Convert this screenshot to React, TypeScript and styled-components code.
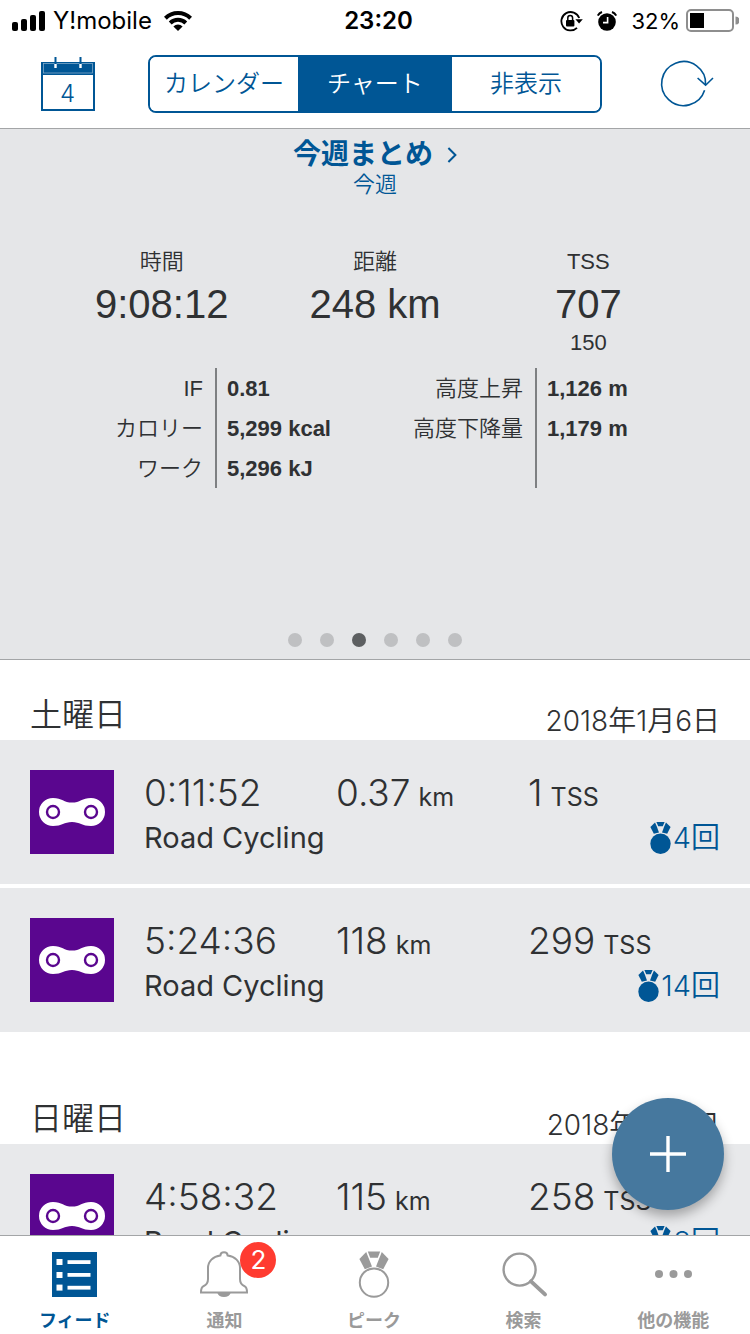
import React from 'react';
import styled, { createGlobalStyle } from 'styled-components';

const color = {
  brand: '#005695',
  ink: '#2f3133',
  panel: '#e5e6e8',
  card: '#e8e9eb',
  line: '#a3a5a7',
  muted: '#9a9a9a',
  purple: '#5a068f',
  alert: '#ff3b30',
};

const GlobalStyle = createGlobalStyle`
  * { box-sizing: border-box; }
  body {
    margin: 0;
    background: #fff;
    color: ${color.ink};
    font-family: Inter, "Noto Sans CJK JP", sans-serif;
  }
  h1, h2, p, dl, dd, dt, ul { margin: 0; padding: 0; font-weight: inherit; }
  ul { list-style: none; }
  button { font: inherit; color: inherit; border: 0; padding: 0; background: none; cursor: pointer; }
  a { color: inherit; text-decoration: none; }
  svg { display: block; flex: none; }
`;

const Screen = styled.div`
  display: flex;
  flex-direction: column;
  height: 100vh;
  overflow: hidden;
`;

/* Status bar */

const StatusBar = styled.header`
  display: grid;
  grid-template-columns: 1fr auto 1fr;
  align-items: center;
  flex: none;
  height: 40px;
  padding: 0 11px 0 12px;
  color: #000;
  font-size: 24px;
  line-height: 42px;
`;

const StatusGroup = styled.div<{ $end?: boolean; $gap: number }>`
  display: flex;
  align-items: center;
  justify-content: ${(p) => (p.$end ? 'flex-end' : 'flex-start')};
  gap: ${(p) => p.$gap}px;
`;

const Carrier = styled.span`
  margin-right: 4px;
`;

const Clock = styled.time`
  padding-left: 6px;
  font-weight: 600;
`;

const BatteryLevel = styled.span`
  font-size: 22px;
`;

/* Navigation bar */

const NavBar = styled.nav`
  display: grid;
  grid-template-columns: 1fr minmax(0, 454px) 1fr;
  align-items: center;
  flex: none;
  height: 89px;
  padding: 0 36px;
  border-bottom: 1px solid ${color.line};
`;

const IconButton = styled.button<{ $end?: boolean }>`
  width: 60px;
  height: 60px;
  justify-self: ${(p) => (p.$end ? 'end' : 'start')};
  color: ${color.brand};
`;

const Segments = styled.div`
  display: grid;
  grid-template-columns: 1fr 154px 1fr;
  height: 58px;
  border: 2px solid ${color.brand};
  border-radius: 8px;
  overflow: hidden;
`;

const Segment = styled.button<{ $active?: boolean }>`
  font-size: 24px;
  font-weight: 350;
  line-height: 54px;
  white-space: nowrap;
  color: ${(p) => (p.$active ? '#fff' : color.brand)};
  background: ${(p) => (p.$active ? color.brand : '#fff')};
`;

/* Weekly summary */

const Summary = styled.section`
  display: flex;
  flex-direction: column;
  flex: none;
  height: 531px;
  padding: 10px 55px 12px;
  background: ${color.panel};
  border-bottom: 1px solid ${color.line};
  font-family: "Liberation Sans", "Noto Sans CJK JP", sans-serif;
`;

const SummaryLink = styled.a`
  display: flex;
  flex-direction: column;
  align-items: center;
  color: ${color.brand};
`;

const SummaryTitle = styled.h1`
  display: flex;
  align-items: center;
  gap: 14px;
  font-size: 28px;
  font-weight: 700;
  line-height: 32px;
`;

const SummaryPeriod = styled.p`
  font-size: 22px;
  font-weight: 350;
  line-height: 28px;
`;

const Totals = styled.dl`
  display: grid;
  grid-template-columns: repeat(3, 1fr);
  margin-top: 47px;
  text-align: center;
`;

const Label = styled.dt`
  font-size: 22px;
  font-weight: 350;
  line-height: 32px;
`;

const Total = styled.dd`
  font-size: 40px;
  line-height: 52px;
`;

const Planned = styled.dd`
  font-size: 22px;
  line-height: 26px;
`;

const Details = styled.div`
  display: grid;
  grid-template-columns: 1fr 1fr;
  margin-top: 12px;
`;

const DetailList = styled.dl`
  display: grid;
  grid-template-columns: 160px 1fr;
  grid-auto-rows: 40px;
  min-height: 120px;
  background: linear-gradient(#7e8082, #7e8082) 160px 0 / 2px 100% no-repeat;
`;

const DetailLabel = styled(Label)`
  padding-right: 12px;
  line-height: 42px;
  text-align: right;
  white-space: nowrap;
`;

const DetailValue = styled.dd`
  padding-left: 12px;
  font-size: 22px;
  font-weight: 700;
  line-height: 42px;
  white-space: nowrap;
`;

const Pager = styled.div`
  display: flex;
  justify-content: center;
  gap: 18px;
  margin-top: auto;
`;

const PageDot = styled.button<{ $active?: boolean }>`
  width: 14px;
  height: 14px;
  border-radius: 50%;
  background: ${(p) => (p.$active ? '#5d5f61' : '#bfc0c2')};
`;

/* Feed */

const Feed = styled.main`
  flex: 1;
  min-height: 0;
  overflow-y: auto;
  scrollbar-width: none;
`;

const Day = styled.section`
  padding-bottom: 32px;
`;

const DayHeader = styled.div`
  display: flex;
  align-items: flex-end;
  justify-content: space-between;
  height: 80px;
  padding: 0 30px;
`;

const DayName = styled.h2`
  font-size: 32px;
  font-weight: 350;
  line-height: 50px;
`;

const DayDate = styled.time`
  font-size: 28px;
  font-weight: 350;
  line-height: 38px;
`;

const Cards = styled.ul`
  display: flex;
  flex-direction: column;
  gap: 4px;
`;

const Card = styled.li`
  display: flex;
  gap: 30px;
  height: 144px;
  padding: 30px;
  background: ${color.card};
`;

const SportTile = styled.div`
  flex: none;
  width: 84px;
  height: 84px;
  background: ${color.purple};
`;

const CardBody = styled.div`
  flex: 1;
  min-width: 0;
`;

const Metrics = styled.div`
  display: grid;
  grid-template-columns: repeat(3, 1fr);
  line-height: 46px;
`;

const Metric = styled.span`
  font-size: 37px;
  font-weight: 300;
  white-space: nowrap;
`;

const Unit = styled.span`
  margin-left: 8px;
  font-size: 25px;
  font-weight: 400;
`;

const CardFooter = styled.div`
  display: flex;
  justify-content: space-between;
  line-height: 36px;
  font-size: 29px;
`;

const Peaks = styled.a`
  display: flex;
  align-items: center;
  gap: 2px;
  color: ${color.brand};
  font-weight: 350;
`;

const AddButton = styled.button`
  position: fixed;
  right: 26px;
  bottom: 124px;
  display: grid;
  place-items: center;
  width: 112px;
  height: 112px;
  border-radius: 50%;
  color: #fff;
  background: #46789e;
  box-shadow: 0 6px 12px rgba(0, 0, 0, 0.3);
`;

/* Tab bar */

const TabBar = styled.nav`
  display: flex;
  flex: none;
  height: 99px;
  padding-right: 2px;
  border-top: 1px solid ${color.line};
  background: #fff;
`;

const Tab = styled.a<{ $active?: boolean }>`
  position: relative;
  display: flex;
  flex: 1;
  flex-direction: column;
  align-items: center;
  gap: 7px;
  padding-top: 14px;
  color: ${(p) => (p.$active ? color.brand : color.muted)};
  font-size: 18px;
  font-weight: 700;
  line-height: 28px;
`;

const Badge = styled.span`
  position: absolute;
  top: 6px;
  left: calc(50% + 16px);
  width: 36px;
  height: 36px;
  border-radius: 50%;
  background: ${color.alert};
  color: #fff;
  font-size: 26px;
  font-weight: 400;
  line-height: 36px;
  text-align: center;
`;

/* Icons */

const SignalIcon = () => (
  <svg width="33" height="20" fill="currentColor">
    <rect x="0" y="11" width="6" height="9" rx="2" />
    <rect x="9" y="8" width="6" height="12" rx="2" />
    <rect x="18" y="4" width="6" height="16" rx="2" />
    <rect x="27" y="0" width="6" height="20" rx="2" />
  </svg>
);

const WifiIcon = () => (
  <svg width="28" height="20" viewBox="0 0 28 20" fill="none" stroke="currentColor" strokeWidth="4">
    <path d="M1.4 7.2a18 18 0 0 1 25.2 0" />
    <path d="M6.2 12a11.2 11.2 0 0 1 15.6 0" />
    <path d="M14 20l-4.6-4.6a6.6 6.6 0 0 1 9.2 0z" fill="currentColor" stroke="none" />
  </svg>
);

const RotationLockIcon = () => (
  <svg width="23" height="22" viewBox="0 0 23 22">
    <path d="M19.2 8A9.2 9.2 0 1 0 17 17.8" fill="none" stroke="currentColor" strokeWidth="1.8" />
    <path d="M15.4 9.2h7.4l-3.7 4.2z" fill="currentColor" />
    <rect x="6" y="10" width="8.4" height="6.4" rx="1" fill="currentColor" />
    <path d="M7.8 10.4V8a2.4 2.4 0 0 1 4.8 0v2.4" fill="none" stroke="currentColor" strokeWidth="1.5" />
  </svg>
);

const AlarmIcon = () => (
  <svg width="20" height="20" viewBox="0 0 20 20">
    <circle cx="10" cy="11" r="8.8" fill="currentColor" />
    <path d="M0.8 4.6A8 8 0 0 1 5 1M19.2 4.6A8 8 0 0 0 15 1" fill="none" stroke="currentColor" strokeWidth="2" />
    <path d="M10.6 6v5.6H6" fill="none" stroke="#fff" strokeWidth="1.6" />
  </svg>
);

const BatteryIcon = () => (
  <svg width="53" height="24" viewBox="0 0 53 24">
    <rect x="1" y="1" width="46" height="21" rx="4" fill="none" stroke="#8e8e8e" strokeWidth="2" />
    <rect x="4" y="4" width="14" height="15" fill="currentColor" />
    <path d="M49.5 7.6a4 4 0 0 1 0 8z" fill="#8e8e8e" />
  </svg>
);

const CalendarIcon = () => (
  <svg width="60" height="60" viewBox="0 0 60 60">
    <rect x="6" y="9" width="52" height="47" fill="#fff" stroke="currentColor" strokeWidth="2" />
    <rect x="6" y="9" width="52" height="12" fill="currentColor" />
    <rect x="7.5" y="9.4" width="49" height="9.6" fill="none" stroke="#7fa9c9" strokeWidth="0.8" />
    <path d="M19.5 3v7M44.5 3v7" stroke="currentColor" strokeWidth="2" />
    <path d="M19.5 10v4M44.5 10v4" stroke="#fff" strokeWidth="2.4" />
    <text x="31.5" y="48" fontSize="24" fontWeight="350" textAnchor="middle" fill="currentColor">
      4
    </text>
  </svg>
);

const RefreshIcon = () => (
  <svg width="60" height="60" viewBox="0 0 60 60" fill="none" stroke="currentColor" strokeWidth="1.6">
    <path d="M50.6 36.3A22 22 0 1 1 51.6 31" />
    <path d="M43.6 24l8 7.2 7.4-7.2" />
  </svg>
);

const ChevronIcon = () => (
  <svg width="10" height="16" viewBox="0 0 10 16" fill="none" stroke="currentColor" strokeWidth="2">
    <path d="M1.4 1l7 7-7 7" />
  </svg>
);

const ChainIcon = () => (
  <svg width="84" height="84" viewBox="0 0 84 84">
    <path
      d="M23 28C32 28 34 32.6 42 32.6S52 28 61 28A14 14 0 0 1 61 56C52 56 50 52 42 52S32 56 23 56A14 14 0 0 1 23 28Z"
      fill="#fff"
    />
    <g fill="none" stroke={color.purple} strokeWidth="2.4">
      <circle cx="23" cy="42" r="6" />
      <circle cx="61" cy="42" r="6" />
    </g>
  </svg>
);

const MedalIcon = () => (
  <svg width="21" height="32" viewBox="0 0 21 32" fill="currentColor">
    <circle cx="10.5" cy="21.8" r="10.2" />
    <path d="M6.4 0h8.2l-1.8 4.2H8.2z" />
    <path d="M5 0.4L0.4 5 3.8 11.8 9 10.6 6.8 4.4z" />
    <path d="M16 0.4L20.6 5 17.2 11.8 12 10.6 14.2 4.4z" />
  </svg>
);

const PlusIcon = () => (
  <svg width="36" height="36" stroke="currentColor" strokeWidth="3.4">
    <path d="M18 0v36M0 18h36" />
  </svg>
);

const FeedIcon = () => (
  <svg width="48" height="50" viewBox="0 0 48 50">
    <rect x="1" y="2" width="45" height="45" fill="currentColor" />
    <g fill="#fff">
      <rect x="5.5" y="9" width="6" height="6" />
      <rect x="16.5" y="10.2" width="23" height="3.8" />
      <rect x="5.5" y="22" width="6" height="6" />
      <rect x="16.5" y="23" width="23" height="3.8" />
      <rect x="5.5" y="34.6" width="6" height="6" />
      <rect x="16.5" y="35.8" width="23" height="3.8" />
    </g>
  </svg>
);

const BellIcon = () => (
  <svg width="48" height="50" viewBox="0 0 48 50">
    <path
      d="M20.4 5.4C20.600 1.200 27.400 1.200 27.600 5.400C35 6.400 40 11.400 40 18v11c0 4 1.600 6 4.600 7.200 2 .8 2.400 2.600 2.400 6.200H1c0-3.600.4-5.400 2.400-6.200C6.400 35 8 33 8 29V18c0-6.600 5-11.600 12.400-12.600z"
      fill="none"
      stroke="currentColor"
      strokeWidth="2"
    />
    <path d="M17.4 43h13.2a6.8 5.2 0 0 1-13.2 0z" fill="currentColor" />
  </svg>
);

const PeakIcon = () => (
  <svg width="48" height="50" viewBox="0 0 48 50" fill="currentColor">
    <circle cx="24" cy="32.6" r="14.2" fill="none" stroke="currentColor" strokeWidth="2" />
    <path d="M17.8 1.5h12.4l-2.4 6.300h-7.600z" />
    <path d="M16.2 2L9.4 9 14.8 19.200 22 16.400z" />
    <path d="M31.8 2L38.6 9 33.2 19.200 26 16.400z" />
  </svg>
);

const SearchIcon = () => (
  <svg width="48" height="50" viewBox="0 0 48 50" fill="none" stroke="currentColor">
    <circle cx="19.6" cy="19.6" r="16" strokeWidth="2.4" />
    <path d="M31 31.4l14 13" strokeWidth="4" strokeLinecap="round" />
  </svg>
);

const MoreIcon = () => (
  <svg width="48" height="50" viewBox="0 0 48 50" fill="currentColor">
    <circle cx="10" cy="24" r="4" />
    <circle cx="24.5" cy="24" r="4" />
    <circle cx="39" cy="24" r="4" />
  </svg>
);

/* Data */

type Activity = { time: string; km: string; tss: string; name: string; peaks: string };

const days: { day: string; date: string; iso: string; activities: Activity[] }[] = [
  {
    day: '土曜日',
    date: '2018年1月6日',
    iso: '2018-01-06',
    activities: [
      { time: '0:11:52', km: '0.37', tss: '1', name: 'Road Cycling', peaks: '4回' },
      { time: '5:24:36', km: '118', tss: '299', name: 'Road Cycling', peaks: '14回' },
    ],
  },
  {
    day: '日曜日',
    date: '2018年1月7日',
    iso: '2018-01-07',
    activities: [{ time: '4:58:32', km: '115', tss: '258', name: 'Road Cycling', peaks: '8回' }],
  },
];

const details = [
  [
    ['IF', '0.81'],
    ['カロリー', '5,299 kcal'],
    ['ワーク', '5,296 kJ'],
  ],
  [
    ['高度上昇', '1,126 m'],
    ['高度下降量', '1,179 m'],
  ],
];

const tabs = [
  { label: 'フィード', icon: <FeedIcon />, active: true },
  { label: '通知', icon: <BellIcon />, badge: '2' },
  { label: 'ピーク', icon: <PeakIcon /> },
  { label: '検索', icon: <SearchIcon /> },
  { label: '他の機能', icon: <MoreIcon /> },
];

const ActivityCard = ({ time, km, tss, name, peaks }: Activity) => (
  <Card>
    <SportTile>
      <ChainIcon />
    </SportTile>
    <CardBody>
      <Metrics>
        <Metric>{time}</Metric>
        <Metric>
          {km}
          <Unit>km</Unit>
        </Metric>
        <Metric>
          {tss}
          <Unit>TSS</Unit>
        </Metric>
      </Metrics>
      <CardFooter>
        <span>{name}</span>
        <Peaks href="#peaks">
          <MedalIcon />
          {peaks}
        </Peaks>
      </CardFooter>
    </CardBody>
  </Card>
);

export default function App() {
  return (
    <Screen>
      <GlobalStyle />
      <StatusBar>
        <StatusGroup $gap={8}>
          <SignalIcon />
          <Carrier>Y!mobile</Carrier>
          <WifiIcon />
        </StatusGroup>
        <Clock>23:20</Clock>
        <StatusGroup $end $gap={14}>
          <RotationLockIcon />
          <AlarmIcon />
          <StatusGroup $gap={6}>
            <BatteryLevel>32%</BatteryLevel>
            <BatteryIcon />
          </StatusGroup>
        </StatusGroup>
      </StatusBar>

      <NavBar>
        <IconButton aria-label="今日">
          <CalendarIcon />
        </IconButton>
        <Segments>
          <Segment>カレンダー</Segment>
          <Segment $active aria-pressed="true">
            チャート
          </Segment>
          <Segment>非表示</Segment>
        </Segments>
        <IconButton $end aria-label="更新">
          <RefreshIcon />
        </IconButton>
      </NavBar>

      <Summary>
        <SummaryLink href="#week">
          <SummaryTitle>
            今週まとめ
            <ChevronIcon />
          </SummaryTitle>
          <SummaryPeriod>今週</SummaryPeriod>
        </SummaryLink>
        <Totals>
          <div>
            <Label>時間</Label>
            <Total>9:08:12</Total>
          </div>
          <div>
            <Label>距離</Label>
            <Total>248 km</Total>
          </div>
          <div>
            <Label>TSS</Label>
            <Total>707</Total>
            <Planned>150</Planned>
          </div>
        </Totals>
        <Details>
          {details.map((rows, i) => (
            <DetailList key={i}>
              {rows.map(([label, value]) => (
                <React.Fragment key={label}>
                  <DetailLabel>{label}</DetailLabel>
                  <DetailValue>{value}</DetailValue>
                </React.Fragment>
              ))}
            </DetailList>
          ))}
        </Details>
        <Pager>
          {[1, 2, 3, 4, 5, 6].map((n) => (
            <PageDot key={n} $active={n === 3} aria-label={`${n}`} />
          ))}
        </Pager>
      </Summary>

      <Feed>
        {days.map((d) => (
          <Day key={d.iso}>
            <DayHeader>
              <DayName>{d.day}</DayName>
              <DayDate dateTime={d.iso}>{d.date}</DayDate>
            </DayHeader>
            <Cards>
              {d.activities.map((a) => (
                <ActivityCard key={a.time} {...a} />
              ))}
            </Cards>
          </Day>
        ))}
      </Feed>

      <AddButton aria-label="追加">
        <PlusIcon />
      </AddButton>

      <TabBar>
        {tabs.map((t) => (
          <Tab key={t.label} href="#tab" $active={t.active}>
            {t.icon}
            {t.label}
            {t.badge && <Badge>{t.badge}</Badge>}
          </Tab>
        ))}
      </TabBar>
    </Screen>
  );
}
